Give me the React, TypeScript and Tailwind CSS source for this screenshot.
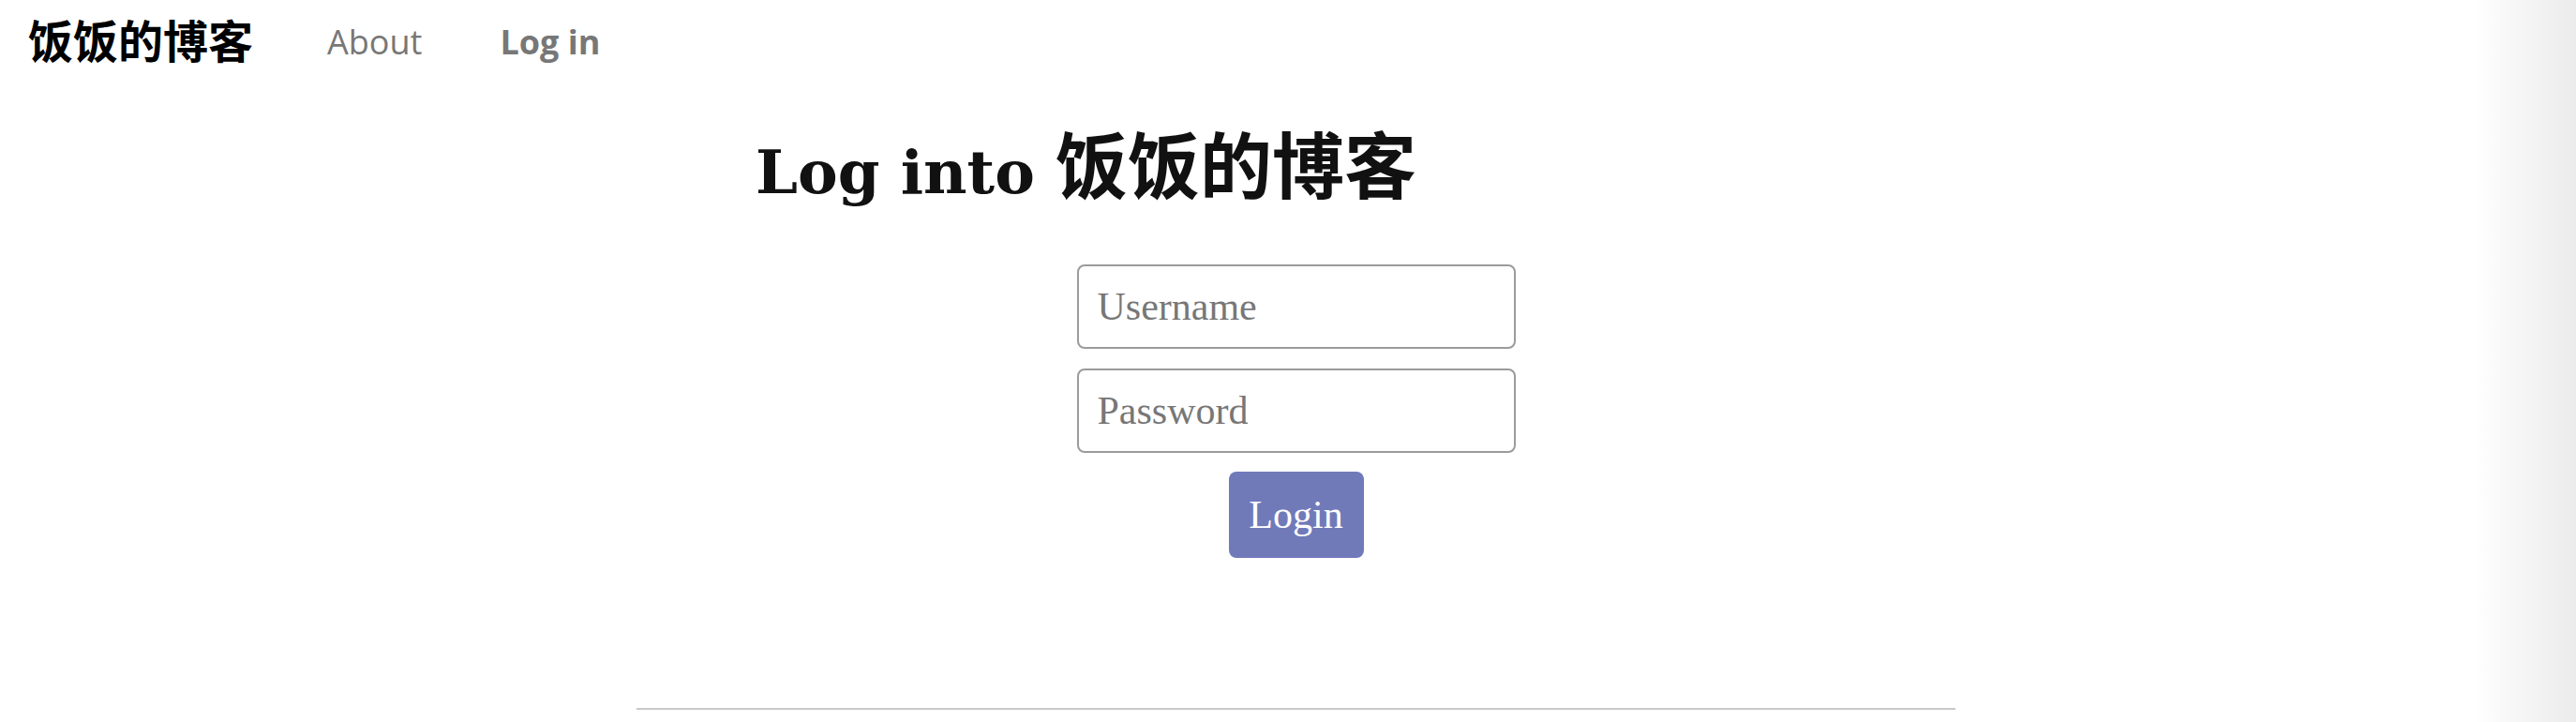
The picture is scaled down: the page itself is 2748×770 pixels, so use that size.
import React from "react";

const cjk = '"Noto Sans CJK SC", "Open Sans", sans-serif';

export default function App() {
  return (
    <div className="relative min-h-screen w-full overflow-hidden bg-white">
      <nav className="flex items-start pt-[17px] pl-[30px]">
        <a
          href="#"
          className="text-[48px] leading-[48px] font-bold text-black whitespace-nowrap"
          style={{ fontFamily: cjk }}
        >
          饭饭的博客
        </a>
        <a
          href="#"
          className="ml-[79px] mt-[4px] text-[36px] leading-[48px] text-[#777777] whitespace-nowrap"
          style={{ fontFamily: '"Open Sans", sans-serif' }}
        >
          About
        </a>
        <a
          href="#"
          className="ml-[83px] mt-[4px] text-[36px] leading-[48px] font-bold text-[#777777] whitespace-nowrap"
          style={{ fontFamily: '"Open Sans", sans-serif' }}
        >
          Log in
        </a>
      </nav>

      <main className="ml-[679px] w-[1407px]">
        <h1
          className="mt-[65px] pl-[127px] text-[64px] leading-none font-bold text-[#111111] whitespace-nowrap"
          style={{ fontFamily: '"DejaVu Serif", serif' }}
        >
          Log into{" "}
          <span className="text-[77px]" style={{ fontFamily: cjk }}>
            饭饭的博客
          </span>
        </h1>

        <form
          className="mt-[66px] flex flex-col items-center gap-[21px]"
          style={{ fontFamily: '"Liberation Serif", serif' }}
          onSubmit={(e) => e.preventDefault()}
        >
          <input
            type="text"
            placeholder="Username"
            className="box-border w-[468px] h-[90px] rounded-[8px] border-2 border-[#9b9b9b] bg-white px-[20px] text-[42px] text-[#333] placeholder:text-[#777777] outline-none"
          />
          <input
            type="password"
            placeholder="Password"
            className="box-border w-[468px] h-[90px] rounded-[8px] border-2 border-[#9b9b9b] bg-white px-[20px] text-[42px] text-[#333] placeholder:text-[#777777] outline-none"
          />
          <button
            type="submit"
            className="-mt-[1px] w-[144px] h-[92px] rounded-[8px] bg-[#717ab9] text-[42px] leading-none text-white"
          >
            Login
          </button>
        </form>

        <hr className="mt-[160px] border-0 border-t-2 border-[#c9c9c9]" />
      </main>

      <div className="pointer-events-none absolute inset-y-0 right-0 w-[110px] bg-gradient-to-r from-transparent to-[#ebebeb]" />
    </div>
  );
}
